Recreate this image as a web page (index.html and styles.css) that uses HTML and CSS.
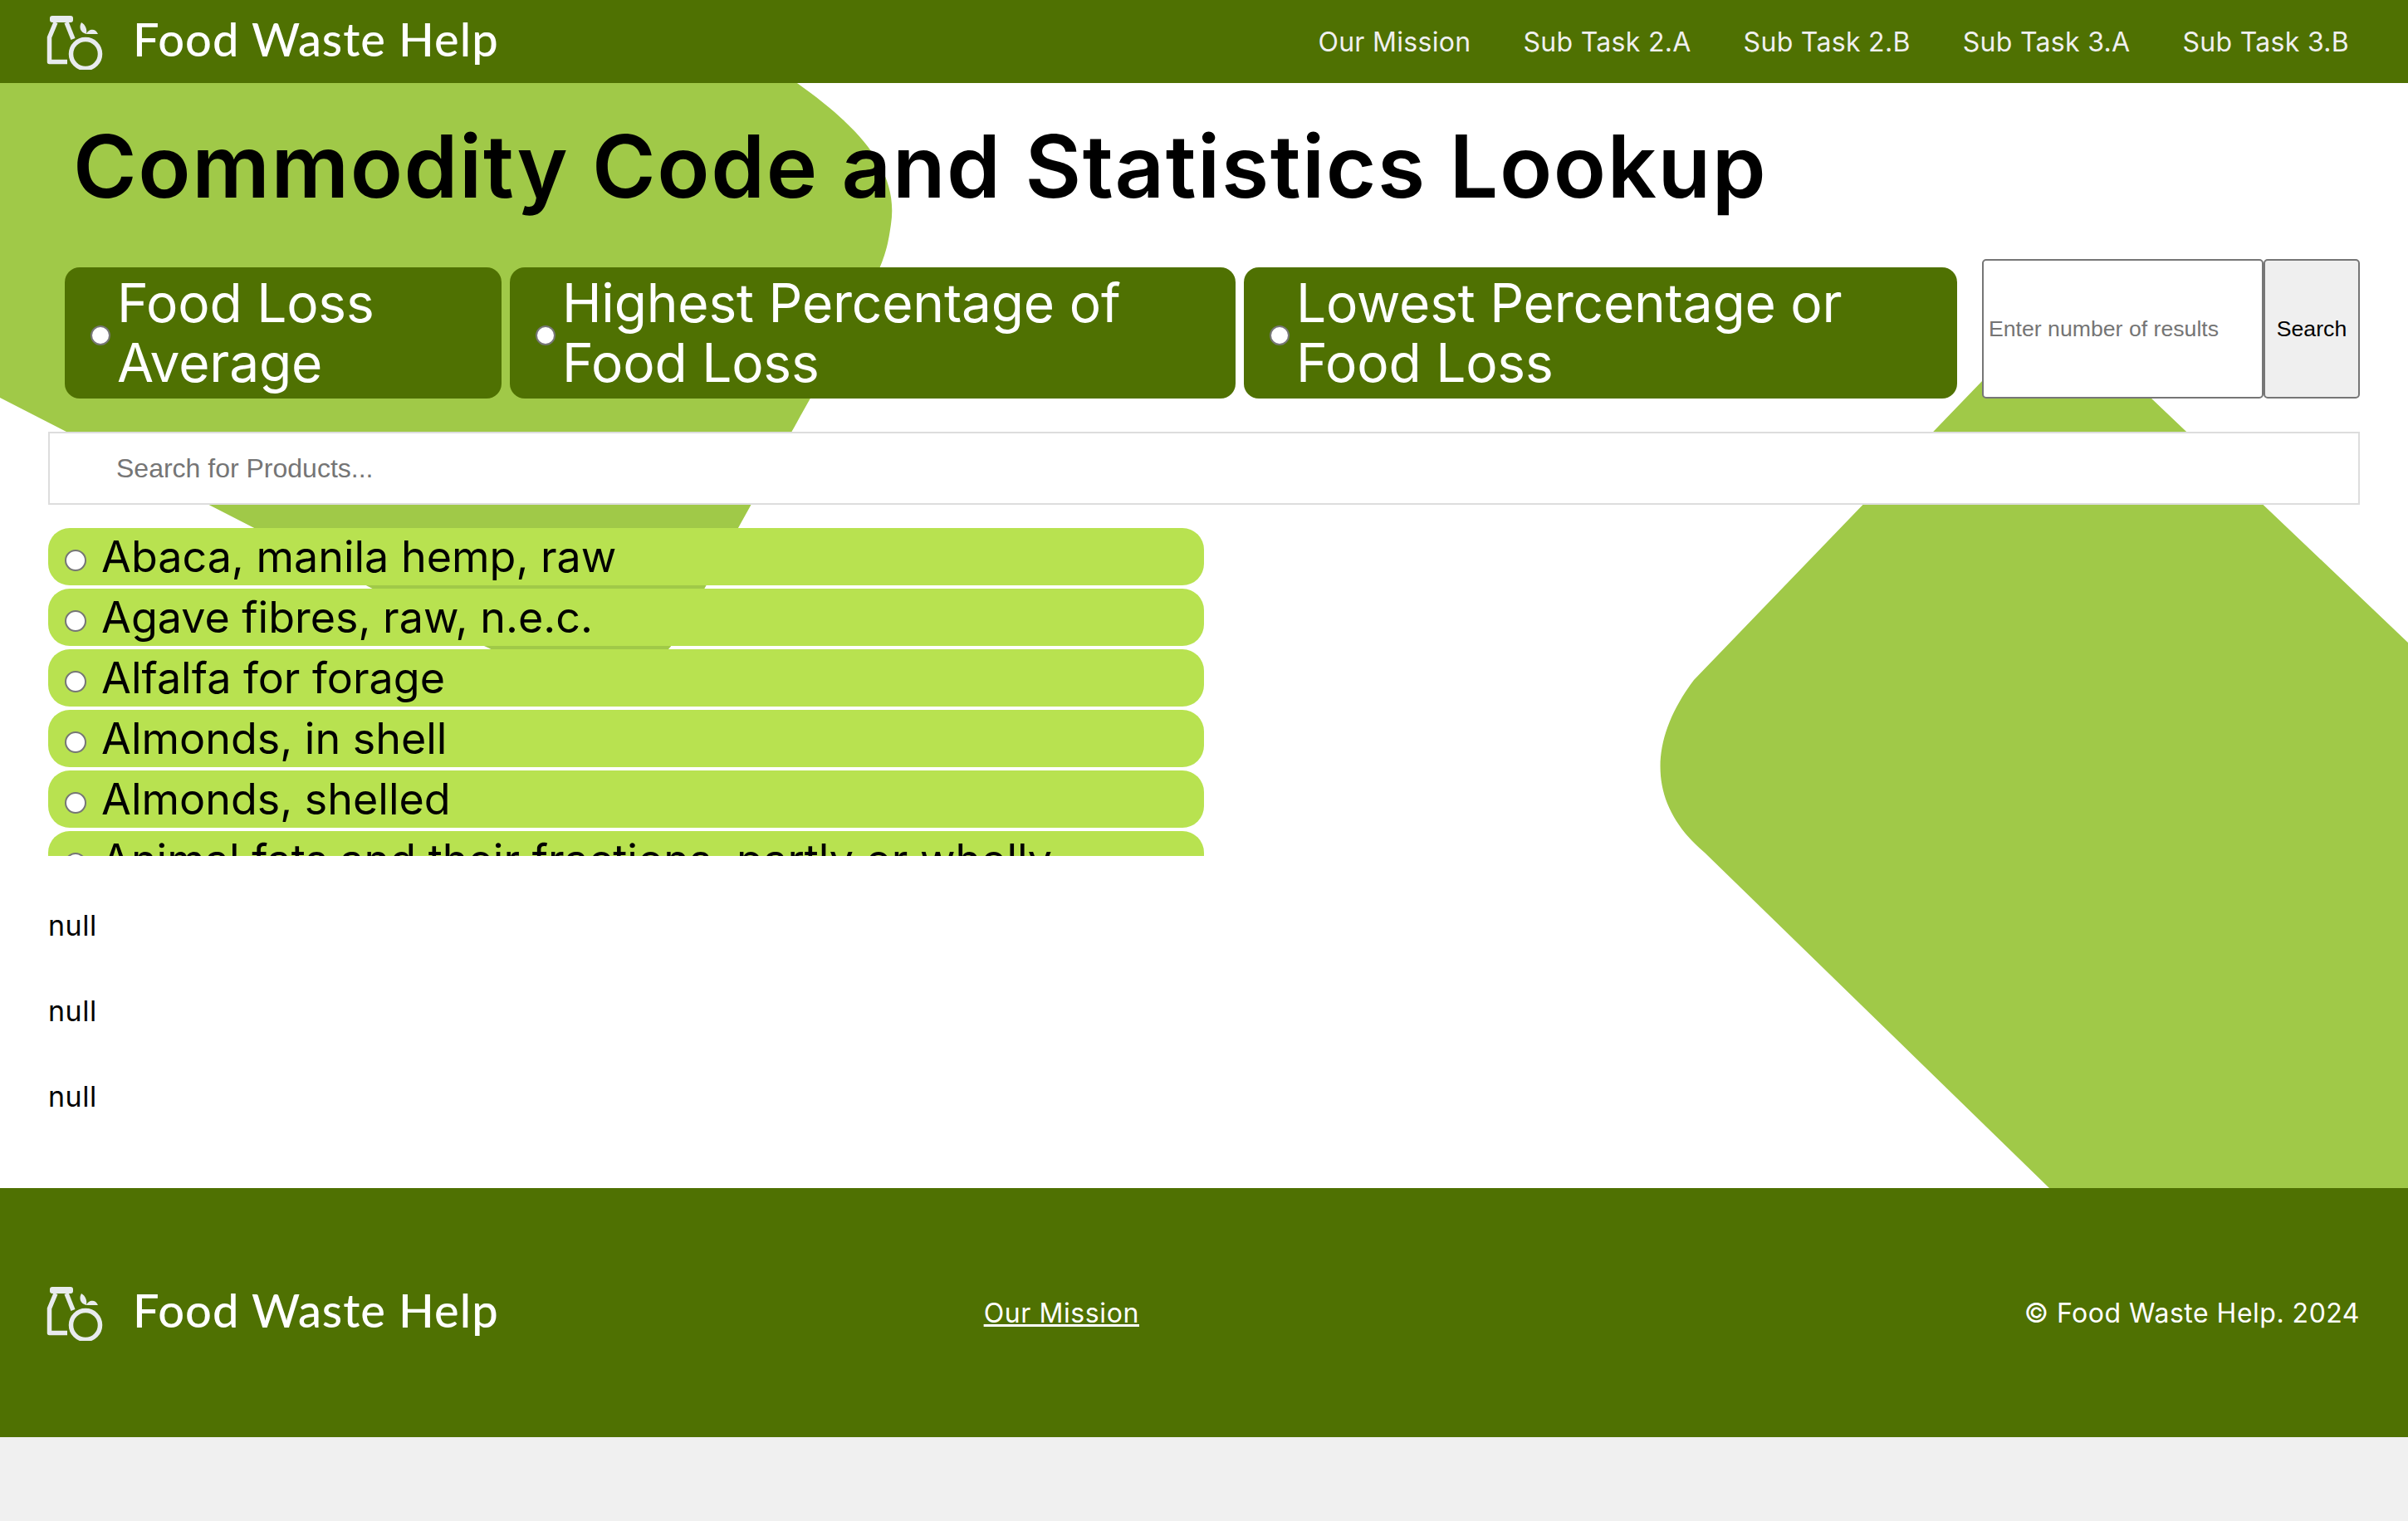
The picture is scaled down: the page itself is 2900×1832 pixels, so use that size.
FILE: index.html
```html
<!DOCTYPE html>
<html lang="en">
<head>
  <meta charset="UTF-8" />
  <meta name="viewport" content="width=device-width, initial-scale=1.0"/>
  <title>Food Waste Help</title>
  <link rel="stylesheet" href="styles.css">
</head>
<body>

  <header class="site-bar">
    <a class="brand" href="#">
      <svg class="brand-logo" viewBox="52 14 72 68" aria-hidden="true">
        <g fill="none" stroke="#e8ebee" stroke-width="5.5">
          <path d="M67 25 L59.5 43 V72.5 H81" stroke-linejoin="round"/>
          <path d="M80 25 L88 45"/>
          <circle cx="103" cy="63" r="17.5"/>
        </g>
        <rect x="60" y="17" width="28" height="8" rx="3" fill="#e8ebee"/>
        <path d="M98 25 C95 30 96 37 104 39 C105 33 103 28 98 25 Z M104 39 C106 33 115 31 118 39 Z" fill="#e8ebee"/>
      </svg>
      <span class="brand-name">Food Waste Help</span>
    </a>
    <nav class="top-nav">
      <a href="#">Our Mission</a>
      <a href="#">Sub Task 2.A</a>
      <a href="#">Sub Task 2.B</a>
      <a href="#">Sub Task 3.A</a>
      <a href="#">Sub Task 3.B</a>
    </nav>
  </header>

  <main class="lookup">
    <svg class="blobs" viewBox="0 100 2900 1332" aria-hidden="true">
      <path d="M0 60 H900 C1010 130 1085 190 1073 270 C1066 320 1060 330 954 519 L820 760 C790 815 740 830 660 815 C630 810 610 790 583 778 L0 479 Z"/>
      <path d="M2388 458 C2420 425 2460 400 2490 400 C2530 400 2560 450 2589 478 L2900 774 V1432 H2469 L2053 1027 C1983 968 1985 892 2040 819 Z"/>
    </svg>

    <h1 class="page-title">Commodity Code and Statistics Lookup</h1>

    <div class="controls">
      <label class="mode"><input type="radio" name="mode"><span>Food Loss Average</span></label>
      <label class="mode"><input type="radio" name="mode"><span>Highest Percentage of Food Loss</span></label>
      <label class="mode"><input type="radio" name="mode"><span>Lowest Percentage or Food Loss</span></label>
      <form class="count-form">
        <input type="number" class="count-input" placeholder="Enter number of results">
        <button type="button" class="count-btn">Search</button>
      </form>
    </div>

    <input type="text" class="product-search" placeholder="Search for Products...">

    <div class="product-list">
      <label class="product"><input type="radio" name="product"><span>Abaca, manila hemp, raw</span></label>
      <label class="product"><input type="radio" name="product"><span>Agave fibres, raw, n.e.c.</span></label>
      <label class="product"><input type="radio" name="product"><span>Alfalfa for forage</span></label>
      <label class="product"><input type="radio" name="product"><span>Almonds, in shell</span></label>
      <label class="product"><input type="radio" name="product"><span>Almonds, shelled</span></label>
      <label class="product"><input type="radio" name="product"><span>Animal fats and their fractions, partly or wholly hydrogenated</span></label>
    </div>

    <div class="results">
      <p>null</p>
      <p>null</p>
      <p>null</p>
    </div>
  </main>

  <footer class="site-foot">
    <a class="brand" href="#">
      <svg class="brand-logo" viewBox="52 14 72 68" aria-hidden="true">
        <g fill="none" stroke="#e8ebee" stroke-width="5.5">
          <path d="M67 25 L59.5 43 V72.5 H81" stroke-linejoin="round"/>
          <path d="M80 25 L88 45"/>
          <circle cx="103" cy="63" r="17.5"/>
        </g>
        <rect x="60" y="17" width="28" height="8" rx="3" fill="#e8ebee"/>
        <path d="M98 25 C95 30 96 37 104 39 C105 33 103 28 98 25 Z M104 39 C106 33 115 31 118 39 Z" fill="#e8ebee"/>
      </svg>
      <span class="brand-name">Food Waste Help</span>
    </a>
    <a class="foot-link" href="#">Our Mission</a>
    <p class="foot-copy">© Food Waste Help. 2024</p>
  </footer>

</body>
</html>
```

FILE: styles.css
```css
body {
  margin: 0;
  font-family: Inter, "Open Sans", sans-serif;
  background-color: #f0f0f0;
  color: #000000;
}

.site-bar {
  height: 100px;
  display: flex;
  align-items: center;
  justify-content: space-between;
  padding: 0 71px 0 52px;
  background-color: #4f7102;
}

.brand {
  display: flex;
  align-items: center;
  gap: 36px;
  color: #ffffff;
  text-decoration: none;
}

.brand-logo {
  width: 72px;
  height: 68px;
}

.brand-name {
  padding-bottom: 7px;
  font-family: Lato, sans-serif;
  font-size: 56px;
  font-weight: 500;
  letter-spacing: 1px;
}

.top-nav {
  display: flex;
  gap: 63px;
}

.top-nav a {
  color: #f0f0f0;
  font-size: 32px;
  letter-spacing: 0.3px;
  text-decoration: none;
}

.lookup {
  position: relative;
  height: 1331px;
  overflow: hidden;
  background-color: #ffffff;
}

.blobs {
  position: absolute;
  left: 0;
  top: 0;
  width: 2900px;
  height: 1332px;
  fill: #a0c948;
}

.page-title {
  position: relative;
  height: 212px;
  margin: 0;
  padding-left: 88px;
  font-size: 104px;
  font-weight: 600;
  letter-spacing: 1.6px;
  line-height: 200px;
}

.controls {
  position: relative;
  display: grid;
  grid-template-columns: 526px 874px 859px 475px;
  column-gap: 10px;
  align-items: end;
  padding-left: 78px;
}

.mode {
  display: flex;
  align-items: center;
  gap: 8px;
  height: 158px;
  padding-left: 31px;
  box-sizing: border-box;
  border-radius: 18px;
  background-color: #4f7102;
  color: #ffffff;
  font-size: 64px;
  letter-spacing: -0.2px;
  line-height: 72px;
}

.mode input {
  flex: none;
  appearance: none;
  box-sizing: border-box;
  width: 24px;
  height: 24px;
  margin: 6px 0 0;
  border: 2px solid #767676;
  border-radius: 50%;
  background-color: #ffffff;
}

.count-form {
  display: flex;
  margin-left: 20px;
  height: 168px;
}

.count-input {
  width: 339px;
  box-sizing: border-box;
  padding: 0 6px;
  border: 2px solid #767676;
  border-radius: 5px;
  font-family: "Liberation Sans", Arial, sans-serif;
  font-size: 26.67px;
}

.count-btn {
  width: 116px;
  padding: 0;
  border: 2px solid #767676;
  border-radius: 5px;
  background-color: #efefef;
  font-family: "Liberation Sans", Arial, sans-serif;
  font-size: 26.67px;
  color: #000000;
}

.product-search {
  position: relative;
  display: block;
  width: 2784px;
  height: 88px;
  box-sizing: border-box;
  margin: 40px 0 0 58px;
  padding: 0 80px;
  border: 2px solid #dddddd;
  background-color: #ffffff;
  font-family: "Liberation Sans", Arial, sans-serif;
  font-size: 32px;
}

.product-list {
  position: relative;
  width: 1392px;
  height: 395px;
  margin: 28px 0 0 58px;
  overflow: hidden;
}

.product {
  display: flex;
  align-items: flex-start;
  gap: 18px;
  margin-bottom: 4px;
  padding-left: 20px;
  min-height: 69px;
  border-radius: 26px;
  background-color: #b8e250;
  font-size: 52px;
  line-height: 69px;
}

.product input {
  flex: none;
  appearance: none;
  box-sizing: border-box;
  width: 26px;
  height: 26px;
  margin: 26px 0 0;
  border: 2px solid #767676;
  border-radius: 50%;
  background-color: #ffffff;
}

.results {
  position: relative;
  padding: 60px 0 0 58px;
}

.results p {
  margin: 0 0 55px;
  font-size: 34px;
  letter-spacing: 0.5px;
  line-height: 48px;
}

.site-foot {
  height: 300px;
  display: flex;
  align-items: center;
  padding: 0 58px 0 52px;
  background-color: #4f7102;
  color: #ffffff;
}

.foot-link {
  margin-left: 584px;
  color: #ffffff;
  font-size: 32px;
  letter-spacing: 0.6px;
}

.foot-copy {
  margin: 0 0 0 auto;
  font-size: 32px;
  letter-spacing: 0.5px;
}
```
